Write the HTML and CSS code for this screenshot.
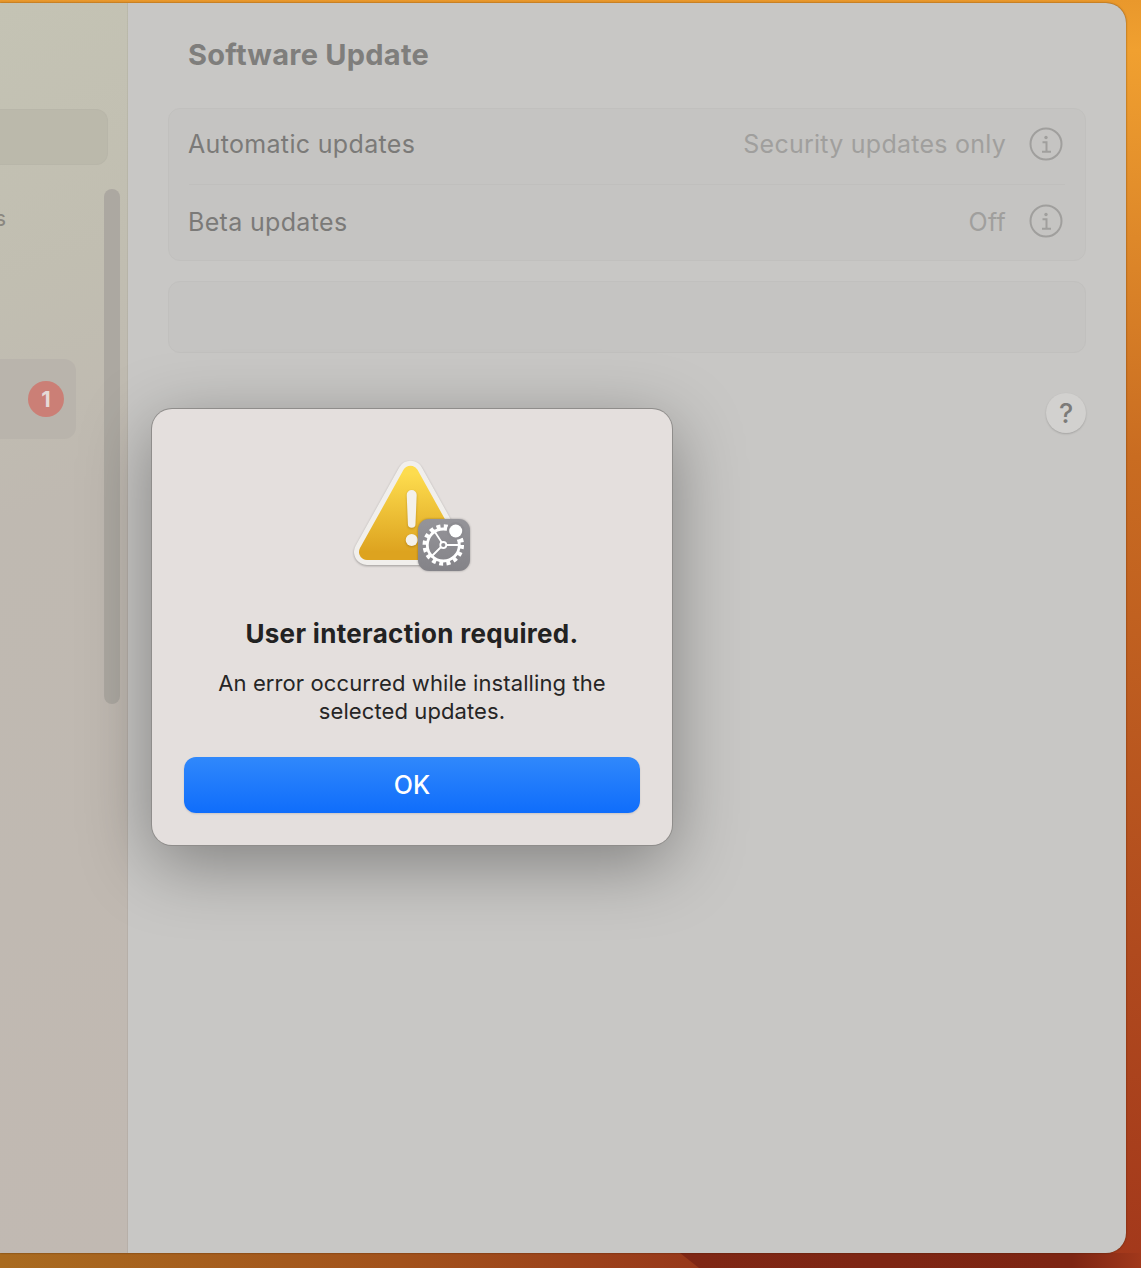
FILE: index.html
```html
<!DOCTYPE html>
<html>
<head>
  <title>Software Update</title>
  <meta charset="UTF-8">
  <link rel="stylesheet" href="styles.css">
</head>
<body>
  <div id="strip"></div>
  <div id="wedge"></div>
  <div id="window">
    <div id="sidebar">
      <div class="search"></div>
      <div class="side-main">
        <div class="side-list">
          <div class="side-item">Updates</div>
          <div class="side-row"><span class="badge">1</span></div>
        </div>
        <div class="scrollbar"></div>
      </div>
    </div>

    <div id="content">
      <h1>Software Update</h1>
      <div class="group">
        <div class="row first">
          <span class="label">Automatic updates</span>
          <span class="value">Security updates only</span>
          <svg class="info" viewBox="0 0 34 34"><circle cx="17" cy="17" r="15.5"/><circle class="dot" cx="17" cy="10.5" r="1.7"/><path d="M13.5 15.2h4v9.3M13 24.7h9"/></svg>
        </div>
        <div class="row">
          <span class="label">Beta updates</span>
          <span class="value">Off</span>
          <svg class="info" viewBox="0 0 34 34"><circle cx="17" cy="17" r="15.5"/><circle class="dot" cx="17" cy="10.5" r="1.7"/><path d="M13.5 15.2h4v9.3M13 24.7h9"/></svg>
        </div>
      </div>
      <div class="group empty"></div>
      <div class="help-line"><span class="help">?</span></div>
    </div>
  </div>

  <div id="dialog">
    <svg class="alert-icon" viewBox="0 0 120 113">
      <defs>
        <linearGradient id="yellow" x1="0" y1="0" x2="0" y2="1">
          <stop offset="0" stop-color="#fddc4e"/>
          <stop offset="1" stop-color="#dda31f"/>
        </linearGradient>
        <linearGradient id="tile" x1="0" y1="0" x2="0" y2="1">
          <stop offset="0" stop-color="#959499"/>
          <stop offset="1" stop-color="#848388"/>
        </linearGradient>
      </defs>
      <path class="tri-outer" d="M58.500 13.700 L15 92 H102 Z" fill="#f1efec" stroke="#f1efec" stroke-width="26" stroke-linejoin="round"/>
      <path d="M58.500 13.700 L15 92 H102 Z" fill="url(#yellow)" stroke="url(#yellow)" stroke-width="16" stroke-linejoin="round"/>
      <path class="mark" d="M54.700 35 a5 5 0 0 1 10 0 L63.500 64 a3.800 3.800 0 0 1 -7.600 0 Z" fill="#f4f1ea"/>
      <circle class="mark" cx="59.700" cy="80" r="6" fill="#f4f1ea"/>
      <rect class="tile" x="66" y="59" width="52" height="52" rx="11" fill="url(#tile)"/>
      <g fill="none" stroke="#fff">
        <circle cx="91.300" cy="85" r="16" stroke-width="2.800"/>
        <circle cx="91.300" cy="85" r="18.500" stroke-width="4.500" stroke-dasharray="3.900 3.360"/>
        <circle cx="91.300" cy="85" r="3" stroke-width="1.800"/>
        <path d="M94.300 85H108M89.800 82.400L81.300 69.500M89 87L79 97" stroke-width="1.800"/>
      </g>
      <circle cx="103.700" cy="71" r="9" fill="#8d8c91"/>
      <circle cx="103.700" cy="71" r="6.500" fill="#fff"/>
    </svg>
    <h2>User interaction required.</h2>
    <p>An error occurred while installing the selected updates.</p>
    <button class="ok">OK</button>
  </div>
</body>
</html>
```

FILE: styles.css
```css
html, body {
  margin: 0;
  height: 100%;
}

body {
  width: 1141px;
  height: 1268px;
  position: relative;
  overflow: hidden;
  font-family: 'Inter', 'Liberation Sans', sans-serif;
  background: linear-gradient(180deg, #e9982c 0%, #f0a030 4%, #c96c21 36%, #b04a1e 75%, #a3381b 100%);
  padding-top: 3px;
  box-sizing: border-box;
}

#strip {
  position: absolute;
  left: 0;
  top: 1253px;
  width: 100%;
  height: 15px;
  background: linear-gradient(90deg, #a96b20 0%, #a2521c 35%, #96341a 65%, #a1381b 100%);
}

#wedge {
  position: absolute;
  left: 680px;
  top: 1253px;
  width: 461px;
  height: 15px;
  clip-path: polygon(0 0, 100% 0, 100% 100%, 19px 100%);
  background: linear-gradient(90deg, #7f2715 0%, #7d2513 85%, #a1381b 100%);
}

#window {
  width: 1126px;
  height: 1250px;
  display: flex;
  position: relative;
  background: #c8c7c5;
  border-radius: 0 20px 20px 0;
  box-shadow: 0 0 2px rgba(60, 30, 0, 0.7);
  overflow: hidden;
}

/* sidebar */
#sidebar {
  width: 128px;
  flex-shrink: 0;
  padding-top: 106px;
  box-sizing: border-box;
  background: linear-gradient(160deg, #c4c3b4 0%, #c1beb1 22%, #bfb9b1 40%, #c1b9b2 100%);
  border-right: 1px solid rgba(0, 0, 0, 0.05);
}

.search {
  width: 108px;
  height: 56px;
  background: #bbb9ab;
  border: 1px solid #b8b6a9;
  border-left: none;
  border-radius: 0 12px 12px 0;
  box-sizing: border-box;
}

.side-main {
  display: flex;
  margin-top: 24px;
}

.side-list {
  width: 76px;
  margin-right: 28px;
}

.side-item {
  height: 170px;
  font-size: 22px;
  line-height: 58px;
  color: #8a8780;
  margin-left: -81px;
  white-space: nowrap;
}

.side-row {
  height: 80px;
  background: #b9b4ac;
  border-radius: 0 12px 12px 0;
  display: flex;
  align-items: center;
  justify-content: flex-end;
  padding-right: 12px;
  box-sizing: border-box;
}

.badge {
  width: 36px;
  height: 36px;
  border-radius: 50%;
  background: #cb7f76;
  color: #e6dad6;
  font-size: 22px;
  font-weight: 700;
  display: flex;
  align-items: center;
  justify-content: center;
}

.scrollbar {
  width: 16px;
  height: 515px;
  background: #aca8a1;
  border-radius: 8px;
}

/* main panel */
#content {
  flex: 1;
  padding: 0 40px;
}

h1 {
  margin: 0;
  height: 105px;
  padding-left: 20px;
  font-size: 29px;
  line-height: 104px;
  letter-spacing: 0.25px;
  font-weight: 700;
  color: #7f7e7c;
}

.group {
  background: #c5c4c2;
  border: 1px solid #c1c0be;
  border-radius: 12px;
  padding: 0 20px;
}

.group.empty {
  height: 72px;
  margin-top: 20px;
  box-sizing: border-box;
}

.row {
  height: 76px;
  box-sizing: border-box;
  padding-bottom: 2px;
  display: flex;
  align-items: center;
  font-size: 25px;
  letter-spacing: 0.33px;
}

.row.first {
  height: 75px;
  padding-bottom: 5px;
}

.row + .row {
  border-top: 1px solid #c0bfbd;
}

.label {
  color: #7b7a78;
  flex: 1;
  margin-left: -1px;
}

.value {
  color: #a09f9d;
  letter-spacing: 0.25px;
}

.info {
  width: 34px;
  height: 34px;
  margin-left: 23px;
  margin-right: 2px;
  margin-bottom: 1px;
  fill: none;
  stroke: #a09f9d;
  stroke-width: 2;
}

.info .dot {
  fill: #a09f9d;
  stroke: none;
}

.help-line {
  display: flex;
  justify-content: flex-end;
  margin-top: 40px;
}

.help {
  width: 40px;
  height: 40px;
  border-radius: 50%;
  background: #d2d1cf;
  box-shadow: 0 1px 2px rgba(0, 0, 0, 0.18);
  color: #7c7b79;
  font-size: 27px;
  font-weight: 500;
  display: flex;
  align-items: center;
  justify-content: center;
}

/* alert */
#dialog {
  position: absolute;
  left: 152px;
  top: 409px;
  width: 520px;
  height: 436px;
  box-sizing: border-box;
  padding: 51px 32px 0;
  background: #e4dfdd;
  border-radius: 20px;
  box-shadow: 0 0 0 1px #8f8d8b, 0 18px 70px rgba(0, 0, 0, 0.36);
  text-align: center;
  display: flex;
  flex-direction: column;
  align-items: center;
}

.alert-icon {
  width: 120px;
  height: 113px;
  flex-shrink: 0;
  display: block;
}

.tri-outer {
  filter: drop-shadow(0 1px 1px rgba(0, 0, 0, 0.3));
}

.mark {
  filter: drop-shadow(0 1px 1px rgba(120, 80, 0, 0.4));
}

.tile {
  filter: drop-shadow(0 0 1px rgba(0, 0, 0, 0.3));
}

#dialog h2 {
  margin: 44px 0 0;
  font-size: 26px;
  line-height: 34px;
  letter-spacing: 0.32px;
  font-weight: 700;
  color: #222;
}

#dialog p {
  margin: 18px 0 0;
  width: 420px;
  font-size: 22px;
  line-height: 28px;
  letter-spacing: 0.1px;
  color: #262525;
}

.ok {
  margin-top: 32px;
  width: 456px;
  height: 56px;
  padding-bottom: 2px;
  border: none;
  border-radius: 12px;
  background: linear-gradient(180deg, #3088fb 0%, #0f6dfb 100%);
  box-shadow: 0 1px 2px rgba(0, 0, 0, 0.12);
  color: #fff;
  font-family: inherit;
  font-size: 25px;
  font-weight: 500;
}
```
